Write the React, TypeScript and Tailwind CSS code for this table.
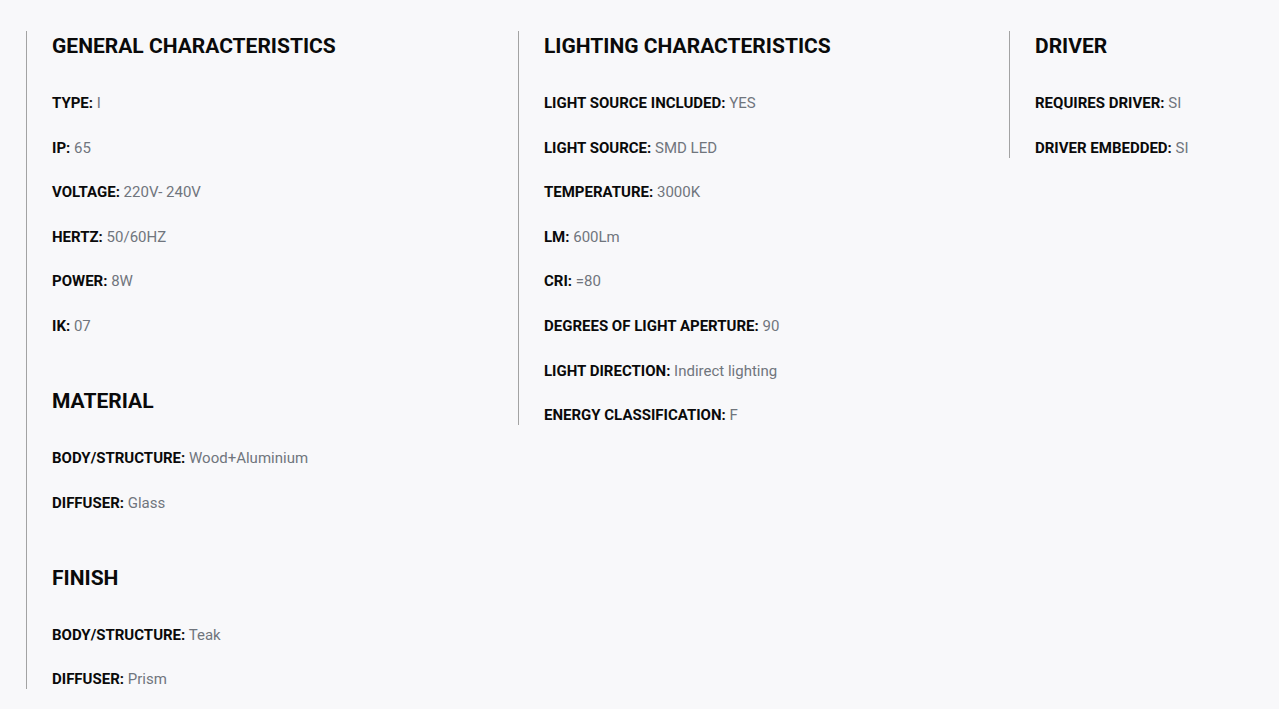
const sections: { title: string; items: [string, string][] }[][] = [
  [
    {
      title: "GENERAL CHARACTERISTICS",
      items: [
        ["TYPE", "I"],
        ["IP", "65"],
        ["VOLTAGE", "220V- 240V"],
        ["HERTZ", "50/60HZ"],
        ["POWER", "8W"],
        ["IK", "07"],
      ],
    },
    {
      title: "MATERIAL",
      items: [
        ["BODY/STRUCTURE", "Wood+Aluminium"],
        ["DIFFUSER", "Glass"],
      ],
    },
    {
      title: "FINISH",
      items: [
        ["BODY/STRUCTURE", "Teak"],
        ["DIFFUSER", "Prism"],
      ],
    },
  ],
  [
    {
      title: "LIGHTING CHARACTERISTICS",
      items: [
        ["LIGHT SOURCE INCLUDED", "YES"],
        ["LIGHT SOURCE", "SMD LED"],
        ["TEMPERATURE", "3000K"],
        ["LM", "600Lm"],
        ["CRI", "=80"],
        ["DEGREES OF LIGHT APERTURE", "90"],
        ["LIGHT DIRECTION", "Indirect lighting"],
        ["ENERGY CLASSIFICATION", "F"],
      ],
    },
  ],
  [
    {
      title: "DRIVER",
      items: [
        ["REQUIRES DRIVER", "SI"],
        ["DRIVER EMBEDDED", "SI"],
      ],
    },
  ],
];

const widths = ["w-[492px]", "w-[491px]", "flex-1"];

function Section({ title, items }: { title: string; items: [string, string][] }) {
  return (
    <div>
      <h3 className="mb-8 text-[21px] font-bold leading-[30px] text-[#0a0a0a]">{title}</h3>
      <ul className="flex flex-col gap-[24.6px]">
        {items.map(([label, value], i) => (
          <li key={i} className="text-[15px] leading-[20px]">
            <span className="font-bold text-[#0a0a0a]">{label}:</span>{" "}
            <span className="text-[#70757d]">{value}</span>
          </li>
        ))}
      </ul>
    </div>
  );
}

export default function App() {
  return (
    <div
      className="min-h-[709px] bg-[#f8f8fa] pl-[26px] pt-[31px]"
      style={{ fontFamily: "Roboto, 'Liberation Sans', sans-serif" }}
    >
      <div className="flex items-start">
        {sections.map((col, ci) => (
          <div key={ci} className={`${widths[ci]} shrink-0`}>
            <div className="flex flex-col gap-[50px] border-l border-[#a3a3a3] pl-[25px]">
              {col.map((s, si) => (
                <Section key={si} title={s.title} items={s.items} />
              ))}
            </div>
          </div>
        ))}
      </div>
    </div>
  );
}
